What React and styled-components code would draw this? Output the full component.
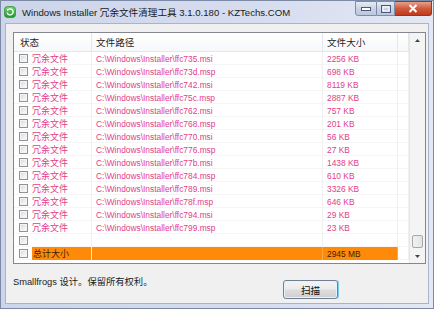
import React from "react";
import styled, { createGlobalStyle } from "styled-components";

const GlobalStyle = createGlobalStyle`
  html, body {
    margin: 0;
    padding: 0;
    background: #ffffff;
  }
  * {
    box-sizing: border-box;
  }
`;

const files = [
  ["ffc735.msi", "2256 KB"],
  ["ffc73d.msp", "698 KB"],
  ["ffc742.msi", "8119 KB"],
  ["ffc75c.msp", "2887 KB"],
  ["ffc762.msi", "757 KB"],
  ["ffc768.msp", "201 KB"],
  ["ffc770.msi", "56 KB"],
  ["ffc776.msp", "27 KB"],
  ["ffc77b.msi", "1438 KB"],
  ["ffc784.msp", "610 KB"],
  ["ffc789.msi", "3326 KB"],
  ["ffc78f.msp", "646 KB"],
  ["ffc794.msi", "29 KB"],
  ["ffc799.msp", "23 KB"],
];

const App = () => {
  return (
    <>
      <GlobalStyle />
      <Window>
        <TitleBar>
          <AppIcon viewBox="0 0 12 12">
            <defs>
              <linearGradient id="g" x1="0" y1="0" x2="0" y2="1">
                <stop offset="0" stopColor="#6fd36a" />
                <stop offset="1" stopColor="#1f9a2c" />
              </linearGradient>
            </defs>
            <rect x="0.5" y="0.5" width="11" height="11" rx="3" fill="url(#g)" stroke="#1b7a25" strokeWidth="0.6" />
            <path d="M3.2 6.6 A3 3 0 1 0 4.2 3.6" fill="none" stroke="#fff" strokeWidth="1.4" />
            <path d="M2.6 2.6 L5 3.4 L3.6 5.2 Z" fill="#fff" />
          </AppIcon>
          <TitleText>Windows Installer 冗余文件清理工具 3.1.0.180 - KZTechs.COM</TitleText>
          <WinButtons>
            <WinButton $w={22}>
              <svg width="10" height="4" viewBox="0 0 10 4">
                <rect x="0.5" y="0.5" width="9" height="3" fill="#fff" stroke="#4a5a78" strokeWidth="1" />
              </svg>
            </WinButton>
            <WinButton $w={18}>
              <svg width="10" height="8" viewBox="0 0 10 8">
                <rect x="0.5" y="0.5" width="9" height="7" fill="none" stroke="#4a5a78" strokeWidth="1" />
                <rect x="2" y="2" width="6" height="4" fill="none" stroke="#fff" strokeWidth="1" />
              </svg>
            </WinButton>
            <CloseButton>
              <svg width="10" height="9" viewBox="0 0 10 9">
                <path d="M1.5 1 L8.5 8 M8.5 1 L1.5 8" stroke="#fff" strokeWidth="2" />
              </svg>
            </CloseButton>
          </WinButtons>
        </TitleBar>

        <Client>
          <ListView>
            <ListBody>
              <HeaderRow>
                <HeaderCell $pad={6}>状态</HeaderCell>
                <HeaderCell $pad={4}>文件路径</HeaderCell>
                <HeaderCell $pad={4}>文件大小</HeaderCell>
                <HeaderCell />
              </HeaderRow>
              {files.map(([name, size]) => (
                <Row key={name}>
                  <StatusCell>
                    <CheckBox />
                    <Label>冗余文件</Label>
                  </StatusCell>
                  <Cell>C:\Windows\Installer\{name}</Cell>
                  <Cell>{size}</Cell>
                  <Cell />
                </Row>
              ))}
              <Row>
                <StatusCell>
                  <CheckBox />
                </StatusCell>
                <Cell />
                <Cell />
                <Cell />
              </Row>
              <Row>
                <StatusCell>
                  <CheckBox />
                  <Label $total>总计大小</Label>
                </StatusCell>
                <Cell $total />
                <Cell $total>2945 MB</Cell>
                <Cell />
              </Row>
            </ListBody>
            <ScrollBar>
              <ScrollArrow>
                <svg width="5" height="3" viewBox="0 0 5 3">
                  <path d="M0 3 L2.5 0 L5 3 Z" fill="#444" />
                </svg>
              </ScrollArrow>
              <Track>
                <Thumb />
              </Track>
              <ScrollArrow>
                <svg width="5" height="3" viewBox="0 0 5 3">
                  <path d="M0 0 L2.5 3 L5 0 Z" fill="#444" />
                </svg>
              </ScrollArrow>
            </ScrollBar>
          </ListView>

          <Footer>
            <Copyright>Smallfrogs 设计。保留所有权利。</Copyright>
            <ScanButton>扫描</ScanButton>
          </Footer>
        </Client>
      </Window>
    </>
  );
};

export default App;

const Window = styled.div`
  width: 434px;
  height: 309px;
  display: flex;
  flex-direction: column;
  border: 1px solid #7d8aa6;
  background: linear-gradient(90deg, #cdd5ea 0%, #d6ddef 60%, #e4e8f4 100%);
  font-family: "Liberation Sans", "Noto Sans CJK SC", sans-serif;
`;

const TitleBar = styled.div`
  height: 21px;
  display: flex;
  align-items: center;
  padding-left: 3px;
`;

const AppIcon = styled.svg`
  width: 12px;
  height: 12px;
  flex: none;
`;

const TitleText = styled.span`
  margin-left: 6px;
  font-size: 9.6px;
  color: #1a1a1a;
  white-space: nowrap;
`;

const WinButtons = styled.div`
  margin-left: auto;
  margin-right: 1px;
  align-self: flex-start;
  display: flex;
  height: 15px;
`;

const WinButton = styled.div`
  width: ${(p) => p.$w}px;
  height: 15px;
  display: flex;
  align-items: center;
  justify-content: center;
  border: 1px solid #7f8ca8;
  border-left: none;
  background: linear-gradient(180deg, #e6ebf5 0%, #c9d3e6 50%, #bcc7de 100%);
  &:first-child {
    border-left: 1px solid #7f8ca8;
    border-bottom-left-radius: 3px;
  }
`;

const CloseButton = styled.div`
  width: 37px;
  height: 15px;
  display: flex;
  align-items: center;
  justify-content: center;
  border: 1px solid #8a3a2a;
  border-left: none;
  border-bottom-right-radius: 3px;
  background: linear-gradient(180deg, #e6a08c 0%, #d05a3c 50%, #c0391e 100%);
`;

const Client = styled.div`
  flex: 1;
  margin: 1px 4px 4px 4px;
  background: #f0f0f0;
  border: 1px solid #a9b3c9;
  padding: 8px 3px 0 7px;
  display: flex;
  flex-direction: column;
`;

const ListView = styled.div`
  width: 413px;
  height: 232px;
  border: 1px solid #828790;
  background: #ffffff;
  display: grid;
  grid-template-columns: 1fr 16px;
  overflow: hidden;
`;

const ListBody = styled.div`
  display: flex;
  flex-direction: column;
`;

const HeaderRow = styled.div`
  height: 19px;
  display: grid;
  grid-template-columns: 78px 231px 75px 1fr;
  border-bottom: 1px solid #e3e6ea;
  background: linear-gradient(180deg, #ffffff 0%, #f7f8fa 100%);
`;

const HeaderCell = styled.div`
  display: flex;
  align-items: center;
  padding-left: ${(p) => p.$pad || 0}px;
  font-size: 9.6px;
  color: #1e1e1e;
  border-right: 1px solid #e3e6ea;
`;

const Row = styled.div`
  height: 13px;
  display: grid;
  grid-template-columns: 78px 231px 75px 1fr;
  border-bottom: 1px solid #f5f5f5;
`;

const StatusCell = styled.div`
  display: flex;
  align-items: center;
  padding-left: 5px;
  border-right: 1px solid #f0f0f0;
`;

const CheckBox = styled.div`
  width: 9px;
  height: 9px;
  flex: none;
  border: 1px solid #8f9296;
  background: linear-gradient(135deg, #d4d6d9 0%, #eef0f2 60%, #ffffff 100%);
  box-shadow: inset 0 0 0 1px #f4f4f4;
`;

const Label = styled.span`
  flex: 1;
  height: 100%;
  display: flex;
  align-items: center;
  margin-left: 4px;
  padding-left: ${(p) => (p.$total ? 1 : 0)}px;
  font-size: 9px;
  color: ${(p) => (p.$total ? "#3a2200" : "#e2408a")};
  background: ${(p) => (p.$total ? "#ff8a0a" : "transparent")};
`;

const Cell = styled.div`
  display: flex;
  align-items: center;
  padding-left: 4px;
  font-size: 8.4px;
  white-space: nowrap;
  overflow: hidden;
  color: ${(p) => (p.$total ? "#3a2200" : "#e2408a")};
  background: ${(p) => (p.$total ? "#ff8a0a" : "transparent")};
  border-right: 1px solid ${(p) => (p.$total ? "#ffa640" : "#f0f0f0")};
`;

const ScrollBar = styled.div`
  display: flex;
  flex-direction: column;
  background: #f4f4f4;
  border-left: 1px solid #e6e6e6;
`;

const ScrollArrow = styled.div`
  height: 14px;
  display: flex;
  align-items: center;
  justify-content: center;
`;

const Track = styled.div`
  flex: 1;
  display: flex;
  flex-direction: column;
  justify-content: flex-end;
  align-items: center;
  padding-bottom: 1px;
`;

const Thumb = styled.div`
  width: 11px;
  height: 13px;
  border: 1px solid #a4a7ab;
  border-radius: 2px;
  background: linear-gradient(90deg, #f2f2f2 0%, #e2e3e5 100%);
`;

const Footer = styled.div`
  display: grid;
  grid-template-columns: 270px 55px;
  align-items: start;
  padding-top: 12px;
`;

const Copyright = styled.span`
  font-size: 9.3px;
  line-height: 12px;
  color: #1a1a1a;
  white-space: nowrap;
`;

const ScanButton = styled.button`
  margin-top: 4px;
  width: 55px;
  height: 19px;
  padding: 0;
  border: 1px solid #6f7f95;
  border-radius: 3px;
  background: linear-gradient(180deg, #f4f4f4 0%, #ebebeb 48%, #dddddd 52%, #cfcfcf 100%);
  box-shadow: inset 0 0 0 1px #e6f3fb, 1px 0 0 #7ecbf0;
  font-family: "Noto Sans CJK SC", sans-serif;
  font-size: 9.6px;
  color: #111;
`;
